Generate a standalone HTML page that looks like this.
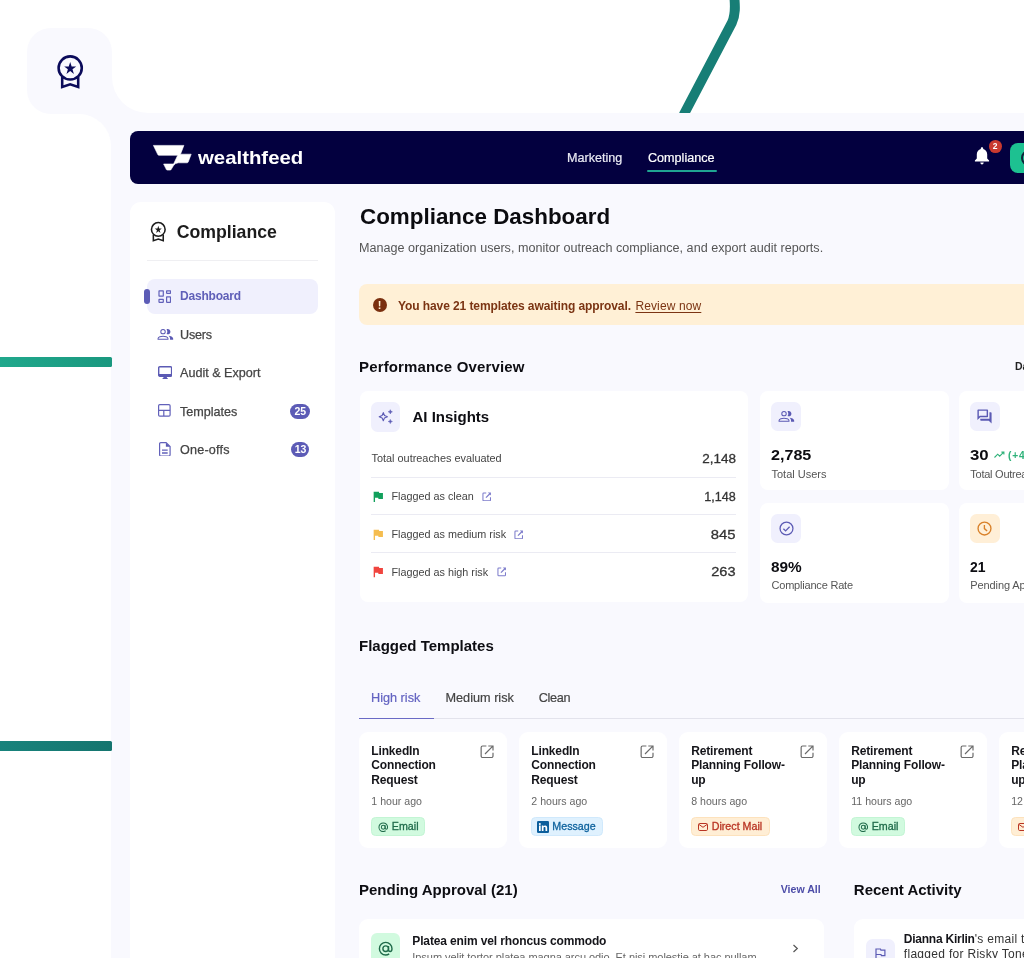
<!DOCTYPE html>
<html lang="en">
<head>
<meta charset="utf-8">
<title>Compliance Dashboard</title>
<style>
*{box-sizing:border-box;margin:0;padding:0}
html,body{width:1024px;height:958px;overflow:hidden;background:#fff}
body{font-family:"Liberation Sans",sans-serif;color:#111;position:relative;-webkit-font-smoothing:antialiased}
.abs{position:absolute}
#stage{will-change:transform;position:absolute;left:0;top:0;width:1024px;height:958px;overflow:hidden;background:#f9f9fe}
/* white cut-outs that create the notched panel */
.cut-top{left:112px;top:0;width:912px;height:112.5px;background:#fff;border-bottom-left-radius:36px;overflow:hidden}
.cut-tl{left:0;top:0;width:112px;height:114px;background:#fff}
.cut-left{left:0;top:113.500px;width:111.400px;height:845px;background:#fff;border-top-right-radius:32px}
.tab{left:27px;top:28px;width:85px;height:85.500px;background:#f9f9fe;border-radius:24px 24px 0 24px}
.bar{left:0;width:111.7px;height:10px;border-radius:0 1.5px 1.5px 0}
/* top nav */
#nav{left:129.800px;top:131.300px;width:900px;height:52.600px;background:#03003f;border-radius:8px 0 0 8px}
#nav .brand{left:68.400px;top:15.600px;font-weight:bold;font-size:18.400px;line-height:22px;color:#fff;transform:scaleX(1.107);transform-origin:left center;white-space:nowrap}
.navlink{-webkit-text-stroke:.200px currentColor;color:#e9e9f3;font-size:12px;transform:scaleX(1.050);transform-origin:left center;white-space:nowrap;top:20px;line-height:14px}
/* sidebar */
#side{left:129.7px;top:202px;width:205.5px;height:770px;background:#fff;border-radius:11px}
.mi{left:17.3px;width:170.6px;height:35px;border-radius:8px}
.mi span.t{position:absolute;left:33px;top:10.600px;-webkit-text-stroke:.250px currentColor;font-size:12.600px;line-height:15px;color:#444;white-space:nowrap}
.mi svg{position:absolute}
.badge{position:absolute;background:#5c5bb6;color:#fff;font-weight:bold;font-size:10.5px;border-radius:8px;height:15px;line-height:15px;text-align:center}
/* main */
h1{position:absolute;left:359.500px;top:204px;font-size:21.500px;transform:scaleX(1.0416);transform-origin:left center;font-weight:bold;color:#0b0b0f;white-space:nowrap;line-height:26px}
.sub{left:359px;top:240.500px;font-size:12px;transform:scaleX(1.0495);transform-origin:left center;color:#555;white-space:nowrap;line-height:14px}
.h2{font-size:15px;font-weight:bold;color:#0d0d12;white-space:nowrap;line-height:18px}
.card{background:#fff;border-radius:8px}
.ibox{width:29.800px;height:29.700px;border-radius:6.500px;background:#f0f0fd}
.lbl{font-size:11px;color:#555;white-space:nowrap;line-height:13px}
.num{transform-origin:left center;font-size:15.500px;font-weight:bold;color:#0d0d12;white-space:nowrap;line-height:18px}
.row{left:11.5px;width:365px;height:37px}
.row .l{position:absolute;left:0;top:12px;font-size:10.800px;color:#444;white-space:nowrap;line-height:13px}
.row .v{transform-origin:right center;position:absolute;right:0;top:9.900px;-webkit-text-stroke:.300px currentColor;font-size:13.500px;color:#333;white-space:nowrap;line-height:18px}
.hr{left:11.5px;width:365px;height:1.3px;background:#ebebf3}
.tcard{top:732px;width:148px;height:116px;background:#fff;border-radius:9px}
.tcard .tt{position:absolute;left:12px;top:11.500px;font-weight:bold;font-size:12px;letter-spacing:-.150px;line-height:14.800px;color:#15151a;width:96px}
.tcard .ago{position:absolute;left:12px;top:63px;font-size:10.600px;color:#666;line-height:13px;white-space:nowrap}
.chip{position:absolute;left:11.500px;top:84.800px;height:19.700px;border-radius:4.500px;font-size:10.700px;line-height:17.700px;-webkit-text-stroke:.300px currentColor;white-space:nowrap;border:1px solid transparent}
.tcard svg.open{position:absolute;left:120.500px;top:12.800px}
.fl{position:absolute;left:2.100px;top:12.500px}
.lkw{position:absolute;top:13.500px}
.lk{display:block}
.tab-t{-webkit-text-stroke:.200px currentColor;top:689.500px;font-size:12.700px;color:#444;white-space:nowrap;line-height:16px}
</style>
</head>
<body>
<div id="stage">
<!-- decorative background cut-outs -->
<div class="abs cut-top">
  <svg class="abs" style="left:0;top:0" width="912" height="113" viewBox="112 0 912 113"><path d="M734 -6 C735.500 7 735.500 15 732 22.500 L683.500 115" fill="none" stroke="#177e76" stroke-width="9.800"/></svg>
</div>
<div class="abs cut-tl"></div>
<div class="abs cut-left"></div>
<div class="abs tab">
  <svg class="abs" style="left:23.850px;top:24px" width="38.400" height="38.400" viewBox="0 0 24 24" fill="none" stroke="#0b0b5a" stroke-width="1.600"><circle cx="12" cy="10" r="7.250"/><path d="M7 15.600V21.850L12 20.200l5 1.650V15.600"/><path fill="#0b0b5a" stroke="none" d="M9.68 13.69 12 11.93l2.310 1.760-.880-2.850L15.750 9h-2.840L12 6.190 11.090 9H8.250l2.310 1.840z"/></svg>
</div>
<div class="abs bar" style="top:356.8px;background:linear-gradient(90deg,#20a88c,#1a987f)"></div>
<div class="abs bar" style="top:741px;background:linear-gradient(90deg,#18837c,#15756f)"></div>

<!-- top navigation -->
<div id="nav" class="abs">
  <svg class="abs" style="left:20px;top:10px" width="46" height="34" viewBox="150 141.300 46 34"><path d="M153.400 145.700 H183.900 L180.500 154.500 H191.200 L188.200 162.300 Q187.900 163.100 187 163.100 H178.400 Q175.200 163.300 173.400 166 L171.100 169.900 Q170.800 170.400 170.200 170.400 H167.300 Q166.700 170.400 166.400 169.900 L163.600 164.300 H173.600 L177.700 155.600 H158.900 Q158.100 155.600 157.800 154.900 Z" fill="#fff" stroke="#fff" stroke-width="0.6" stroke-linejoin="round"/></svg>
  <div class="abs brand">wealthfeed</div>
  <div class="abs navlink" style="left:437.500px">Marketing</div>
  <div class="abs navlink" style="left:518.700px;color:#fff">Compliance</div>
  <div class="abs" style="left:517.200px;top:38.800px;width:70px;height:2.300px;background:#1fa592;border-radius:1px"></div>
  <svg class="abs" style="left:843px;top:14.800px" width="18" height="20" viewBox="0 0 18 20"><path fill="#fff" d="M9 1.200c.700 0 1.200.500 1.200 1.200v.500c2.400.600 4 2.700 4 5.300v4.300l1.900 2.100v.900H1.900v-.900l1.900-2.100V8.200c0-2.600 1.600-4.700 4-5.300v-.500c0-.700.500-1.200 1.200-1.200zM7.300 16.600h3.400c0 1-.700 1.800-1.700 1.800s-1.700-.800-1.700-1.800z"/></svg>
  <div class="abs" style="left:859px;top:9.100px;width:12.800px;height:12.800px;border-radius:50%;background:#c9392f;color:#fff;font-size:8.500px;font-weight:bold;line-height:12.800px;text-align:center">2</div>
  <div class="abs" style="left:879.900px;top:11.600px;width:60px;height:29.700px;border-radius:8px;background:#1dc191">
    <div class="abs" style="left:11.500px;top:7px;width:16px;height:16px;border:2.200px solid #10243a;border-radius:50%"></div>
  </div>
</div>

<!-- sidebar -->
<div id="side" class="abs">
  <svg class="abs" style="left:17.500px;top:17.600px" width="22.600" height="22.600" viewBox="0 0 24 24" fill="none" stroke="#1c1c1c" stroke-width="1.650"><circle cx="12" cy="10" r="7.250"/><path d="M6.750 15.600V21.950L12 20.200l5.250 1.750V15.600"/><path fill="#1c1c1c" stroke="none" d="M9.680 13.690 12 11.930l2.310 1.760-.88-2.850L15.750 9h-2.840L12 6.190 11.090 9H8.250l2.310 1.840z"/></svg>
  <div class="abs" style="left:47px;top:18.700px;font-size:17.700px;font-weight:bold;color:#1c1c1c;line-height:22px;white-space:nowrap">Compliance</div>
  <div class="abs" style="left:17.300px;top:58px;width:170.600px;height:1.200px;background:#efeff2"></div>

  <div class="abs" style="left:14.500px;top:87.300px;width:5.600px;height:14.400px;border-radius:3px;background:#5c5cb6;z-index:2"></div>
  <div class="abs mi" style="top:76.800px;background:#f0f0fd">
    <svg style="left:11px;top:11.200px" width="13.500" height="13.500" viewBox="0 0 13.500 13.500" fill="none" stroke="#6261ba" stroke-width="1.200"><rect x="1" y="0.800" width="4.300" height="5.400" rx=".200"/><rect x="8.600" y="0.800" width="3.900" height="2.500" rx=".200"/><rect x="1" y="9.400" width="4.300" height="2.900" rx=".200"/><rect x="8.600" y="6.900" width="3.900" height="5.400" rx=".200"/></svg>
    <span class="t" style="color:#6060b8;font-weight:bold;font-size:12px;letter-spacing:-.190px;-webkit-text-stroke:0">Dashboard</span>
  </div>
  <div class="abs mi" style="top:115.200px">
    <svg style="left:9.100px;top:7.800px" width="18.720" height="18.720" viewBox="0 0 24 24"><circle cx="9" cy="8.500" r="2.850" fill="none" stroke="#5b5ab4" stroke-width="1.300"/><path fill="none" stroke="#5b5ab4" stroke-width="1.300" d="M2.650 18.350v-1.100c0-1.700 3.900-2.850 6.350-2.850s6.350 1.150 6.350 2.850v1.100z"/><path fill="#5b5ab4" d="M16.040 13.810c1.160.84 1.960 1.960 1.960 3.440V19h4v-1.750c0-2.020-3.500-3.170-5.960-3.440zM15 12c1.930 0 3.500-1.570 3.500-3.500S16.930 5 15 5c-.54 0-1.040.13-1.500.35.630.89 1 1.980 1 3.150s-.37 2.260-1 3.150c.46.220.96.350 1.500.350z"/></svg>
    <span class="t" style="letter-spacing:-.200px">Users</span>
  </div>
  <div class="abs mi" style="top:153.600px">
    <svg style="left:10.800px;top:10.600px" width="14.300" height="13.200" viewBox="0 0 14.300 13.200"><rect x="0.700" y="0.700" width="12.900" height="9.500" rx="1.100" fill="none" stroke="#5b5ab4" stroke-width="1.400"/><path d="M0.700 7.900h12.900v2.300h-12.900zM5.700 10.800h2.900l.5 1.200h.6v.9h-5.100v-.9h.6z" fill="#5b5ab4"/></svg>
    <span class="t">Audit &amp; Export</span>
  </div>
  <div class="abs mi" style="top:192px">
    <svg style="left:11.500px;top:10.400px" width="12.800" height="12.800" viewBox="0 0 12.800 12.800" fill="none" stroke="#6261ba" stroke-width="1.200"><rect x="0.600" y="0.600" width="11.500" height="11.500" rx="1.200"/><path d="M0.600 6.300h11.500M5.800 6.300v5.800"/></svg>
    <span class="t">Templates</span>
    <span class="badge" style="left:143.300px;top:9.700px;width:20px">25</span>
  </div>
  <div class="abs mi" style="top:230.400px">
    <svg style="left:12.100px;top:9.500px" width="11.700" height="14.600" viewBox="0 0 11.700 14.600" fill="none" stroke="#6261ba" stroke-width="1.200"><path d="M0.600 1.800a1.200 1.200 0 0 1 1.200-1.200h5.300l4 4v8.200a1.200 1.200 0 0 1-1.200 1.200h-8.100a1.200 1.200 0 0 1-1.200-1.200z"/><path d="M6.900 0.700v4.100h4.100z" fill="#5b5ab4" stroke="none"/><path d="M3 8.100h5.700M3 11h5.700" stroke-width="1.300"/></svg>
    <span class="t" style="letter-spacing:.200px">One-offs</span>
    <span class="badge" style="left:144.500px;top:9.700px;width:18px">13</span>
  </div>
</div>

<!-- main content -->
<h1>Compliance Dashboard</h1>
<div class="abs sub">Manage organization users, monitor outreach compliance, and export audit reports.</div>

<div class="abs" id="alert" style="left:359px;top:284.300px;width:700px;height:40.800px;background:#fff0d6;border-radius:8px">
  <div class="abs" style="left:13.500px;top:13.800px;width:14.400px;height:14.400px;border-radius:50%;background:#7a2f0f;color:#fff0d6;font-weight:bold;font-size:11px;line-height:14.400px;text-align:center">!</div>
  <div class="abs" id="alerttxt" style="left:39px;top:14.500px;font-size:12px;line-height:14px;color:#7b3413;white-space:nowrap"><b style="letter-spacing:-.090px">You have 21 templates awaiting approval.</b><span style="position:absolute;left:237.400px;top:0;letter-spacing:.120px;text-decoration:underline;text-underline-offset:2px">Review now</span></div>
</div>

<div class="abs h2" style="left:359px;top:357.500px;letter-spacing:.150px">Performance Overview</div>
<div class="abs" style="left:1015px;top:360px;font-size:10.500px;font-weight:bold;color:#222;white-space:nowrap;line-height:13px">Date range</div>

<div class="abs card" id="ai" style="left:359.500px;top:391px;width:388px;height:210.700px">
  <div class="abs ibox" style="left:11.400px;top:10.800px;width:29.300px;height:30px">
    <svg class="abs" style="left:6.500px;top:6.700px" width="18" height="17" viewBox="0 0 18 17" fill="none" stroke="#5b5ab4" stroke-width="1.100" stroke-linejoin="round"><path d="M6.300 4.600l1.200 2.900 2.900 1.200-2.900 1.200-1.200 2.900-1.200-2.900-2.900-1.200 2.900-1.200z"/><path d="M13.300 1.700l.6 1.500 1.500.6-1.500.6-.6 1.500-.6-1.500-1.500-.6 1.500-.6zM13.300 11.400l.6 1.500 1.500.6-1.500.6-.6 1.500-.6-1.500-1.500-.6 1.500-.6z" fill="#5b5ab4" stroke-width="0.500"/></svg>
  </div>
  <div class="abs h2" id="aih" style="left:53px;top:17px">AI Insights</div>
  <div class="abs row" style="top:48.900px"><span class="l" style="font-size:10.900px;left:.500px">Total outreaches evaluated</span><span class="v">2,148</span></div>
  <div class="abs hr" style="top:85.600px"></div>
  <div class="abs row" style="top:87px"><svg class="fl" width="10.600" height="11.600" viewBox="0 0 10 11"><path d="M0.600 0.800h5l.3 1h3.500v5.700h-4.200l-.3-1H1.900v4.200H.6z" fill="#12a05c"/></svg><span class="l" style="left:20.500px">Flagged as clean</span><span class="lkw" style="left:110.500px"><svg class="lk" width="9.800" height="9.800" viewBox="0 0 10.400 10.400" fill="none" stroke="#7d7ccb" stroke-width="1.100"><path d="M4.500 1H1.800a.8.800 0 0 0-.8.800v6.600a.8.800 0 0 0 .8.800h6.400a.8.800 0 0 0 .8-.8V5.600"/><path d="M4.200 6L8.300 1.900" stroke-width="1.300"/><path d="M6.200 .500h3.300v3.300z" fill="#7d7ccb" stroke="none"/></svg></span><span class="v" style="transform:scaleX(.930)">1,148</span></div>
  <div class="abs hr" style="top:123px"></div>
  <div class="abs row" style="top:125.100px"><svg class="fl" width="10.600" height="11.600" viewBox="0 0 10 11"><path d="M0.600 0.800h5l.3 1h3.500v5.700h-4.200l-.3-1H1.900v4.200H.6z" fill="#f5bd4f"/></svg><span class="l" style="left:20.500px">Flagged as medium risk</span><span class="lkw" style="left:142.500px"><svg class="lk" width="9.800" height="9.800" viewBox="0 0 10.400 10.400" fill="none" stroke="#7d7ccb" stroke-width="1.100"><path d="M4.500 1H1.800a.8.800 0 0 0-.8.800v6.600a.8.800 0 0 0 .8.800h6.400a.8.800 0 0 0 .8-.8V5.600"/><path d="M4.200 6L8.300 1.900" stroke-width="1.300"/><path d="M6.200 .500h3.300v3.300z" fill="#7d7ccb" stroke="none"/></svg></span><span class="v" style="transform:scaleX(1.100)">845</span></div>
  <div class="abs hr" style="top:160.700px"></div>
  <div class="abs row" style="top:162.500px"><svg class="fl" width="10.600" height="11.600" viewBox="0 0 10 11"><path d="M0.600 0.800h5l.3 1h3.500v5.700h-4.200l-.3-1H1.900v4.200H.6z" fill="#f0453f"/></svg><span class="l" style="left:20.500px">Flagged as high risk</span><span class="lkw" style="left:126px"><svg class="lk" width="9.800" height="9.800" viewBox="0 0 10.400 10.400" fill="none" stroke="#7d7ccb" stroke-width="1.100"><path d="M4.500 1H1.800a.8.800 0 0 0-.8.800v6.600a.8.800 0 0 0 .8.800h6.400a.8.800 0 0 0 .8-.8V5.600"/><path d="M4.200 6L8.300 1.900" stroke-width="1.300"/><path d="M6.200 .500h3.300v3.300z" fill="#7d7ccb" stroke="none"/></svg></span><span class="v" style="transform:scaleX(1.080)">263</span></div>
</div>

<div class="abs card" style="left:759.800px;top:391px;width:189.200px;height:98.700px">
  <div class="abs ibox" style="left:11.500px;top:10.800px">
    <svg class="abs" style="left:6px;top:5.700px" width="18.720" height="18.720" viewBox="0 0 24 24"><circle cx="9" cy="8.500" r="2.850" fill="none" stroke="#5b5ab4" stroke-width="1.300"/><path fill="none" stroke="#5b5ab4" stroke-width="1.300" d="M2.650 18.350v-1.100c0-1.700 3.900-2.850 6.350-2.850s6.350 1.150 6.350 2.850v1.100z"/><path fill="#5b5ab4" d="M16.040 13.810c1.160.84 1.960 1.960 1.960 3.440V19h4v-1.750c0-2.020-3.500-3.170-5.960-3.440zM15 12c1.930 0 3.500-1.570 3.500-3.500S16.930 5 15 5c-.54 0-1.040.13-1.500.35.630.89 1 1.980 1 3.150s-.37 2.260-1 3.150c.46.220.96.350 1.500.350z"/></svg>
  </div>
  <div class="abs num" style="left:11.500px;top:55.400px;transform:scaleX(1.040)">2,785</div>
  <div class="abs lbl" style="left:11.700px;top:76.500px">Total Users</div>
</div>
<div class="abs card" style="left:958.600px;top:391px;width:189.200px;height:98.700px">
  <div class="abs ibox" style="left:11.400px;top:10.800px">
    <svg class="abs" style="left:6.200px;top:6.400px" width="17" height="17" viewBox="0 0 24 24"><path fill="#5b5ab4" d="M15 4v7H5.170l-.59.59-.58.58V4h11m1-2H3c-.55 0-1 .45-1 1v14l4-4h10c.55 0 1-.45 1-1V3c0-.55-.45-1-1-1zm5 4h-2v9H6v2c0 .55.45 1 1 1h11l4 4V7c0-.55-.45-1-1-1z"/></svg>
  </div>
  <div class="abs num" style="left:11.500px;top:55.400px;transform:scaleX(1.084)">30</div>
  <svg class="abs" style="left:35px;top:60px" width="11" height="8" viewBox="0 0 11 8" fill="none" stroke="#2fb27a" stroke-width="1.100"><path d="M0.500 6.500l3.200-3.300 2 2 4-4M7.400 1.100h2.500v2.500"/></svg>
  <div class="abs" style="left:49.500px;top:58px;font-size:10.200px;letter-spacing:.800px;font-weight:bold;color:#2fb27a;white-space:nowrap;line-height:13px">(+4%)</div>
  <div class="abs lbl" style="left:11.700px;top:76.500px;letter-spacing:-.250px">Total Outreaches</div>
</div>
<div class="abs card" style="left:759.800px;top:502.600px;width:189.200px;height:100.200px">
  <div class="abs ibox" style="left:11.500px;top:11.200px">
    <svg class="abs" style="left:7.700px;top:7.500px" width="15" height="15" viewBox="0 0 15 15" fill="none" stroke="#5b5ab4" stroke-width="1.250"><circle cx="7.500" cy="7.500" r="6.450"/><path d="M4.400 7.700l2.200 2.200 4-4.200"/></svg>
  </div>
  <div class="abs num" style="left:11.500px;top:55.800px;transform:scaleX(.990)">89%</div>
  <div class="abs lbl" style="left:11.700px;top:76.600px;letter-spacing:-.200px">Compliance Rate</div>
</div>
<div class="abs card" style="left:958.600px;top:502.600px;width:189.200px;height:100.200px">
  <div class="abs ibox" style="left:11.400px;top:11.200px;background:#ffefd7">
    <svg class="abs" style="left:7.300px;top:7.500px" width="15" height="15" viewBox="0 0 15 15" fill="none" stroke="#d9812a" stroke-width="1.350"><circle cx="7.500" cy="7.500" r="6.450"/><path d="M7.400 3.900v3.700l2.700 2.500"/></svg>
  </div>
  <div class="abs num" style="left:11.500px;top:55.800px;transform:scaleX(.900)">21</div>
  <div class="abs lbl" style="left:11.700px;top:76.600px;letter-spacing:-.100px">Pending Approval</div>
</div>

<div class="abs h2" style="left:359px;top:636.500px">Flagged Templates</div>
<div class="abs" style="left:359.300px;top:718px;width:700px;height:1.200px;background:#e3e3ec"></div>
<div class="abs" style="left:359.300px;top:717.500px;width:74.500px;height:1.800px;background:#6a6ac5"></div>
<div class="abs tab-t" style="left:371px;color:#6464c2">High risk</div>
<div class="abs tab-t" style="left:445.500px">Medium risk</div>
<div class="abs tab-t" style="left:538.700px;letter-spacing:-.300px">Clean</div>
<div class="abs tcard" style="left:359.3px"><div class="tt">LinkedIn Connection Request</div><svg class="open" width="15" height="15" viewBox="0 0 15 15" fill="none" stroke="#6b6b6b" stroke-width="1.200"><path d="M6.400 1H2.650a1.500 1.500 0 0 0-1.500 1.500v8.500a1.500 1.500 0 0 0 1.500 1.500h8.850a1.500 1.500 0 0 0 1.500-1.500V7.800M8.300 1H13v4.500M12.800 1.200L5 9"/></svg><div class="ago">1 hour ago</div><div class="chip" style="width:53.900px;background:#d1fadf;border-color:#c3f5d4;color:#1f6b4a"><svg style="position:absolute;left:6px;top:4px" width="10.500" height="10.500" viewBox="0 0 11 11" fill="none" stroke="#1f6b4a" stroke-width="1.050"><circle cx="5.500" cy="5.500" r="2"/><path d="M7.500 3.500v2.700c0 .8.500 1.300 1.200 1.300s1.300-.7 1.300-2c0-2.500-2-4.500-4.500-4.500s-4.500 2-4.500 4.500 2 4.500 4.500 4.500c1 0 1.800-.3 2.500-.8"/></svg><span style="position:absolute;left:20px;top:0">Email</span></div></div>
<div class="abs tcard" style="left:519.3px"><div class="tt">LinkedIn Connection Request</div><svg class="open" width="15" height="15" viewBox="0 0 15 15" fill="none" stroke="#6b6b6b" stroke-width="1.200"><path d="M6.400 1H2.650a1.500 1.500 0 0 0-1.500 1.500v8.500a1.500 1.500 0 0 0 1.500 1.500h8.850a1.500 1.500 0 0 0 1.500-1.500V7.800M8.300 1H13v4.500M12.800 1.200L5 9"/></svg><div class="ago">2 hours ago</div><div class="chip" style="width:72.600px;background:#dff1fe;border-color:#d0e9fc;color:#0f639e"><svg style="position:absolute;left:5px;top:3.500px" width="12" height="12" viewBox="0 0 12 12"><rect width="12" height="12" rx="1.300" fill="#0b5e9c"/><path d="M2 4.600h1.700V10H2zM2.850 2a1 1 0 1 1 0 2 1 1 0 0 1 0-2zM4.800 4.600h1.600v.8c.3-.5.900-.9 1.800-.9 1.500 0 2 1 2 2.400V10H8.500V7.200c0-.7-.2-1.200-.9-1.200s-1.100.5-1.100 1.200V10H4.800z" fill="#fff"/></svg><span style="position:absolute;left:20.500px;top:0">Message</span></div></div>
<div class="abs tcard" style="left:679.2px"><div class="tt">Retirement Planning Follow-up</div><svg class="open" width="15" height="15" viewBox="0 0 15 15" fill="none" stroke="#6b6b6b" stroke-width="1.200"><path d="M6.400 1H2.650a1.500 1.500 0 0 0-1.500 1.500v8.500a1.500 1.500 0 0 0 1.500 1.500h8.850a1.500 1.500 0 0 0 1.500-1.500V7.800M8.300 1H13v4.500M12.800 1.200L5 9"/></svg><div class="ago">8 hours ago</div><div class="chip" style="width:79.500px;background:#ffeed5;border-color:#fde2bd;color:#b93423"><svg style="position:absolute;left:6px;top:5.200px" width="10" height="8" viewBox="0 0 10 8" fill="none" stroke="#b93423" stroke-width="1"><rect x="0.500" y="0.500" width="9" height="7" rx="1.200"/><path d="M0.900 1.400l4.100 2.900 4.100-2.900"/></svg><span style="position:absolute;left:20px;top:0">Direct Mail</span></div></div>
<div class="abs tcard" style="left:839.2px"><div class="tt">Retirement Planning Follow-up</div><svg class="open" width="15" height="15" viewBox="0 0 15 15" fill="none" stroke="#6b6b6b" stroke-width="1.200"><path d="M6.400 1H2.650a1.500 1.500 0 0 0-1.500 1.500v8.500a1.500 1.500 0 0 0 1.500 1.500h8.850a1.500 1.500 0 0 0 1.500-1.500V7.800M8.300 1H13v4.500M12.800 1.200L5 9"/></svg><div class="ago">11 hours ago</div><div class="chip" style="width:53.900px;background:#d1fadf;border-color:#c3f5d4;color:#1f6b4a"><svg style="position:absolute;left:6px;top:4px" width="10.500" height="10.500" viewBox="0 0 11 11" fill="none" stroke="#1f6b4a" stroke-width="1.050"><circle cx="5.500" cy="5.500" r="2"/><path d="M7.500 3.500v2.700c0 .8.500 1.300 1.200 1.300s1.300-.7 1.300-2c0-2.500-2-4.500-4.500-4.500s-4.500 2-4.500 4.500 2 4.500 4.500 4.500c1 0 1.800-.3 2.500-.8"/></svg><span style="position:absolute;left:20px;top:0">Email</span></div></div>
<div class="abs tcard" style="left:999.2px"><div class="tt">Retirement Planning Follow-up</div><svg class="open" width="15" height="15" viewBox="0 0 15 15" fill="none" stroke="#6b6b6b" stroke-width="1.200"><path d="M6.400 1H2.650a1.500 1.500 0 0 0-1.500 1.500v8.500a1.500 1.500 0 0 0 1.500 1.500h8.850a1.500 1.500 0 0 0 1.500-1.500V7.800M8.300 1H13v4.500M12.800 1.200L5 9"/></svg><div class="ago">12 hours ago</div><div class="chip" style="width:79.500px;background:#ffeed5;border-color:#fde2bd;color:#b93423"><svg style="position:absolute;left:6px;top:5.200px" width="10" height="8" viewBox="0 0 10 8" fill="none" stroke="#b93423" stroke-width="1"><rect x="0.500" y="0.500" width="9" height="7" rx="1.200"/><path d="M0.900 1.400l4.100 2.900 4.100-2.900"/></svg><span style="position:absolute;left:20px;top:0">Direct Mail</span></div></div>

<div class="abs h2" style="left:359px;top:880.600px">Pending Approval (21)</div>
<div class="abs" style="left:780.700px;top:882.500px;font-size:10.600px;font-weight:bold;color:#4d4da8;white-space:nowrap;line-height:13px">View All</div>
<div class="abs h2" style="left:853.800px;top:880.600px">Recent Activity</div>

<div class="abs card" style="left:359.300px;top:919.300px;width:464.600px;height:60px;border-radius:9px">
  <div class="abs" style="left:11.700px;top:14.100px;width:29.200px;height:29.500px;border-radius:6px;background:#d1fadf">
    <svg class="abs" style="left:6.900px;top:7.500px" width="15.400" height="15.400" viewBox="0 0 11 11" fill="none" stroke="#1f6b4a" stroke-width="1"><circle cx="5.500" cy="5.500" r="2"/><path d="M7.500 3.500v2.700c0 .8.500 1.300 1.200 1.300s1.300-.7 1.300-2c0-2.500-2-4.500-4.500-4.500s-4.500 2-4.500 4.500 2 4.500 4.500 4.500c1 0 1.800-.3 2.500-.8"/></svg>
  </div>
  <div class="abs" id="pl1" style="left:53px;top:14.600px;font-size:12px;font-weight:bold;letter-spacing:-.130px;color:#15151a;white-space:nowrap;line-height:14px">Platea enim vel rhoncus commodo</div>
  <div class="abs" id="pl2" style="left:53px;top:32px;font-size:11px;letter-spacing:-.050px;color:#666;white-space:nowrap;line-height:13px">Ipsum velit tortor platea magna arcu odio. Et nisi molestie at hac nullam</div>
  <svg class="abs" style="left:433px;top:24.500px" width="7" height="9" viewBox="0 0 7 9" fill="none" stroke="#555" stroke-width="1.200"><path d="M1.500 1l3.800 3.500-3.800 3.500"/></svg>
</div>
<div class="abs card" style="left:853.800px;top:919.300px;width:300px;height:60px;border-radius:9px">
  <div class="abs ibox" style="left:11.800px;top:19.600px">
    <svg class="abs" style="left:9.500px;top:9px" width="11" height="12" viewBox="0 0 11 12" fill="none" stroke="#5b5ab4" stroke-width="1.200"><path d="M1 11.500V1h4.500l.4 1.200h4v5.500H6.400L6 6.500H1"/></svg>
  </div>
  <div class="abs" id="ra" style="left:50px;top:12.700px;font-size:12px;color:#333;white-space:nowrap;line-height:14.800px;letter-spacing:.300px"><b style="color:#15151a;letter-spacing:-.240px">Dianna Kirlin</b>'s email template was<br>flagged for Risky Tone</div>
</div>
</div>
</body>
</html>
